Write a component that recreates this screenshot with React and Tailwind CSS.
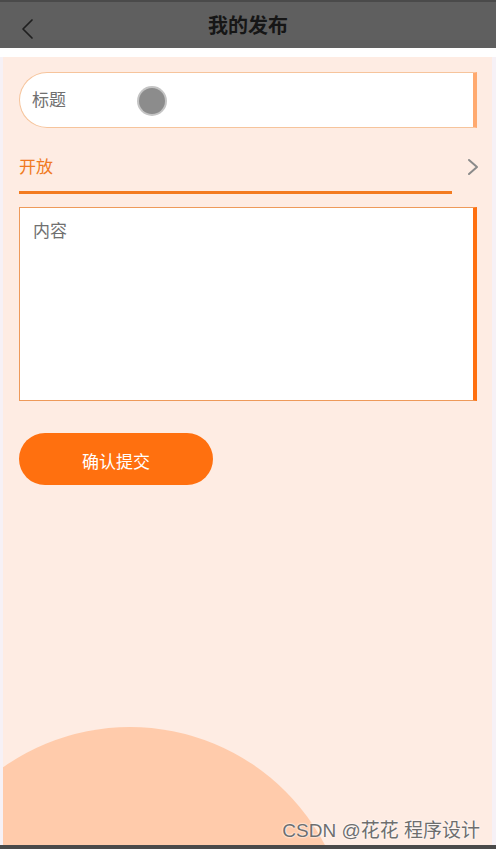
import React from 'react'

const font = { fontFamily: '"Noto Sans CJK SC", "Noto Sans", sans-serif' }

function App() {
  return (
    <div className="w-[496px] h-[849px] flex flex-col bg-[#f6f1f6] overflow-hidden" style={font}>
      {/* Header */}
      <div className="h-12 shrink-0 bg-[#5f5f5f] border-t-2 border-[#4a4a4a] relative flex items-center justify-center">
        <svg className="absolute left-[20px] top-[16px]" width="16" height="22" viewBox="0 0 16 22" fill="none">
          <path d="M12 2 L3 11 L12 20" stroke="#1f1f1f" strokeWidth="1.7" strokeLinecap="round" strokeLinejoin="round" />
        </svg>
        <span className="text-[20px] font-bold text-[#161616] leading-none">我的发布</span>
      </div>
      <div className="h-[9px] shrink-0 bg-white" />

      {/* Panel */}
      <div className="flex-1 ml-[3px] mr-[4px] bg-[#feece3] relative overflow-hidden pt-[15px] pl-4 pr-[15px]">
        {/* Title input */}
        <div className="relative h-14 bg-white rounded-l-full border border-[#f6c49c] border-r-[4px] border-r-[#ffaa70] flex items-center pl-3 pb-[3px]">
          <span className="text-[17px] text-[#707070]">标题</span>
          <div className="absolute left-[119px] top-[15px] w-[26px] h-[26px] rounded-full bg-[#8c8c8c] ring-2 ring-[#c4c4c4]" />
        </div>

        {/* Visibility row */}
        <div className="w-[433px] h-[66px] border-b-[3px] border-[#f37b20] flex items-center justify-between relative">
          <span className="text-[17px] text-[#f07a22] pt-[12px]">开放</span>
        </div>
        <svg className="absolute right-[13px] top-[101px]" width="12" height="18" viewBox="0 0 12 18" fill="none">
          <path d="M2 2 L10 9 L2 16" stroke="#8a8a8a" strokeWidth="2" strokeLinecap="round" strokeLinejoin="round" />
        </svg>

        {/* Content textarea */}
        <div className="mt-[13px] h-[194px] bg-white border border-[#ee9a5a] border-r-[4px] border-r-[#ff7010] pl-[13px] pt-[9px]">
          <span className="text-[17px] text-[#707070]">内容</span>
        </div>

        {/* Submit */}
        <button className="mt-8 w-[194px] h-[52px] rounded-full bg-[#ff700f] text-white text-[17px] flex items-center justify-center pt-[4px]">
          确认提交
        </button>

        {/* Decorative circle */}
        <div className="absolute left-[-93px] top-[670px] w-[440px] h-[440px] rounded-full bg-[#ffcbab]" />

        {/* Watermark */}
        <span
          className="absolute right-[12px] bottom-[1px] text-[19px] leading-[26px] text-[#6e6e6e]"
          style={{ fontFamily: '"Liberation Sans", "Noto Sans CJK SC", sans-serif', textShadow: '0 0 2px #fff, 0 0 2px #fff' }}
        >
          CSDN @花花 程序设计
        </span>
      </div>
      <div className="h-[4px] shrink-0 bg-[#4a4a4a]" />
    </div>
  )
}

export default App
